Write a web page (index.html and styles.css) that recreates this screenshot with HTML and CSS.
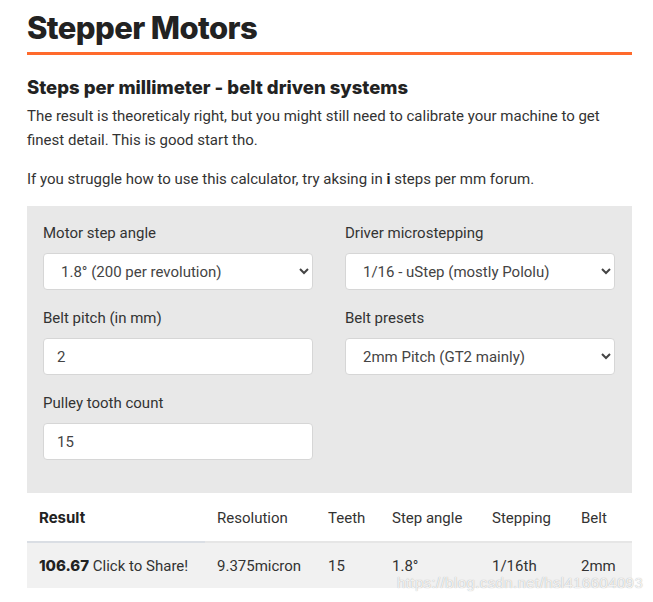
FILE: index.html
```html
<!DOCTYPE html>
<html>
<head>
<meta charset="utf-8">
<link rel="stylesheet" href="styles.css">
</head>
<body>
<main class="page">
  <h1 class="title">Stepper Motors</h1>
  <h2 class="subtitle">Steps per millimeter - belt driven systems</h2>
  <p class="text">The result is theoreticaly right, but you might still need to calibrate your machine to get finest detail. This is good start tho.</p>
  <p class="text">If you struggle how to use this calculator, try aksing in <b>i</b> steps per mm forum.</p>

  <section class="panel">
    <div class="field">
      <label class="label">Motor step angle</label>
      <select class="control">
        <option>1.8° (200 per revolution)</option>
      </select>
    </div>
    <div class="field">
      <label class="label">Driver microstepping</label>
      <select class="control">
        <option>1/16 - uStep (mostly Pololu)</option>
      </select>
    </div>
    <div class="field">
      <label class="label">Belt pitch (in mm)</label>
      <input class="control input" value="2">
    </div>
    <div class="field">
      <label class="label">Belt presets</label>
      <select class="control">
        <option>2mm Pitch (GT2 mainly)</option>
      </select>
    </div>
    <div class="field">
      <label class="label">Pulley tooth count</label>
      <input class="control input" value="15">
    </div>
  </section>

  <table class="results">
    <thead>
      <tr>
        <th class="c-result">Result</th>
        <th class="c-res">Resolution</th>
        <th class="c-teeth">Teeth</th>
        <th class="c-angle">Step angle</th>
        <th class="c-step">Stepping</th>
        <th class="c-belt">Belt</th>
      </tr>
    </thead>
    <tbody>
      <tr>
        <td><b>106.67</b> Click to Share!</td>
        <td>9.375micron</td>
        <td>15</td>
        <td>1.8°</td>
        <td>1/16th</td>
        <td>2mm</td>
      </tr>
    </tbody>
  </table>
</main>
<div class="watermark">https://blog.csdn.net/hsl416604093</div>
</body>
</html>
```

FILE: styles.css
```css
* { box-sizing: border-box; }

html, body {
  margin: 0;
  background: #fff;
}

body {
  font-family: Roboto, "Liberation Sans", sans-serif;
  color: #333;
  position: relative;
  min-height: 602px;
}

.page {
  width: 605px;
  margin-left: 27px;
  padding-top: 8px;
}

.title {
  font-family: Inter, "Liberation Sans", sans-serif;
  font-weight: 800;
  font-size: 31px;
  line-height: 40px;
  letter-spacing: -0.6px;
  color: #222;
  margin: 0;
  padding-bottom: 4px;
  border-bottom: 3px solid #ff6a2c;
}

.subtitle {
  font-family: Inter, "Liberation Sans", sans-serif;
  font-weight: 800;
  font-size: 18.5px;
  line-height: 24px;
  color: #222;
  margin: 20px 0 5px;
}

.text {
  font-size: 15px;
  line-height: 24px;
  color: #333;
  margin: 0 0 15px;
}

.text b {
  font-weight: 700;
  color: #222;
}

.panel {
  margin-top: 15px;
  background: #e8e8e8;
  padding: 16px 16px 33px;
  display: grid;
  grid-template-columns: 270px 270px;
  column-gap: 32px;
  row-gap: 17px;
}

.field {
  display: flex;
  flex-direction: column;
}

.label {
  font-size: 15px;
  line-height: 22px;
  color: #333;
  margin-bottom: 9px;
}

.control {
  height: 37px;
  width: 270px;
  border: 1px solid #d6d6d6;
  border-radius: 4px;
  background: #fff;
  font-family: Roboto, "Liberation Sans", sans-serif;
  font-size: 15px;
  color: #444;
  padding: 0 8px 0 13px;
  margin: 0;
}

.input {
  padding-left: 13px;
}

.results {
  width: 605px;
  border-collapse: collapse;
  font-size: 15px;
  color: #333;
}

.results th,
.results td {
  text-align: left;
  padding: 0 12px;
  white-space: nowrap;
}

.results th {
  height: 49px;
  font-weight: 400;
  border-bottom: 2px solid #e6e6e6;
  padding-top: 1px;
}

.results th.c-result {
  font-family: Inter, "Liberation Sans", sans-serif;
  font-weight: 700;
  color: #222;
  border-bottom-color: #dadee4;
}

.results td {
  height: 46px;
  background: #f1f1f1;
}

.results td b {
  font-family: Inter, "Liberation Sans", sans-serif;
  font-weight: 800;
  color: #222;
}

.c-result { width: 178px; }
.c-res { width: 111px; }
.c-teeth { width: 64px; }
.c-angle { width: 100px; }
.c-step { width: 89px; }
.c-belt { width: 63px; }

.watermark {
  position: absolute;
  left: 397px;
  top: 574px;
  font-family: "Liberation Sans", Arial, sans-serif;
  font-size: 15px;
  color: rgba(255, 255, 255, 0.85);
  text-shadow: 0 0 1px rgba(0, 0, 0, 0.35);
  letter-spacing: 0.4px;
}
```
